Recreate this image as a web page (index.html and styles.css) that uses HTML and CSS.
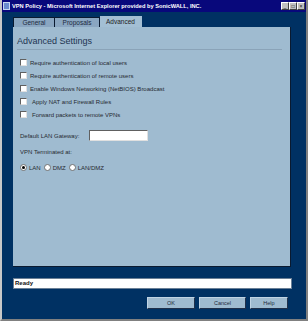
FILE: index.html
```html
<!DOCTYPE html>
<html lang="en">

<head>
    <meta charset="UTF-8">
    <title>VPN Policy</title>
    <link rel="stylesheet" href="styles.css">
</head>

<body>
    <div class="window">
        <div class="title-bar">
            <span class="title-icon"></span>
            <span class="title-text">VPN Policy - Microsoft Internet Explorer provided by SonicWALL, INC.</span>
            <div class="title-buttons">
                <span class="tb-btn">_</span>
                <span class="tb-btn">□</span>
                <span class="tb-btn">×</span>
            </div>
        </div>

        <div class="window-body">
            <div class="tabs">
                <div class="tab">General</div>
                <div class="tab">Proposals</div>
                <div class="tab active">Advanced</div>
            </div>

            <div class="panel">
                <h3 class="panel-header">Advanced Settings</h3>

                <div class="panel-body">
                    <div class="options">
                        <label class="option"><span class="checkbox"></span>Require authentication of local users</label>
                        <label class="option"><span class="checkbox"></span>Require authentication of remote users</label>
                        <label class="option"><span class="checkbox"></span>Enable Windows Networking (NetBIOS) Broadcast</label>
                        <label class="option indent"><span class="checkbox"></span>Apply NAT and Firewall Rules</label>
                        <label class="option indent"><span class="checkbox"></span>Forward packets to remote VPNs</label>
                    </div>

                    <div class="gateway-row">
                        <span class="gateway-label">Default LAN Gateway:</span>
                        <span class="text-input"></span>
                    </div>

                    <div class="vpn-label">VPN Terminated at:</div>
                    <div class="radio-row">
                        <label class="radio-item"><span class="radio checked"></span>LAN</label>
                        <label class="radio-item"><span class="radio"></span>DMZ</label>
                        <label class="radio-item"><span class="radio"></span>LAN/DMZ</label>
                    </div>
                </div>
            </div>

            <div class="status-bar">Ready</div>

            <div class="footer-buttons">
                <button class="btn">OK</button>
                <button class="btn cancel">Cancel</button>
                <button class="btn help">Help</button>
            </div>
        </div>
    </div>
</body>

</html>
```

FILE: styles.css
```css
body {
    margin: 0;
    width: 308px;
    height: 321px;
    font-family: "Liberation Sans", Arial, sans-serif;
    overflow: hidden;
}

.window {
    width: 308px;
    height: 321px;
    box-sizing: border-box;
    border: 2px solid #c8c8c8;
    border-top: none;
    border-right-color: #808080;
    border-bottom-color: #808080;
    display: flex;
    flex-direction: column;
    background-color: #003163;
}

.title-bar {
    height: 12px;
    background-color: #08087b;
    display: flex;
    align-items: center;
    padding: 0 1px 0 1px;
    color: #fff;
}

.title-icon {
    width: 5px;
    height: 6px;
    background-color: #6b8cce;
    border: 1px solid #c8d8f0;
    margin-right: 2px;
}

.title-text {
    font-size: 5.7px;
    font-weight: bold;
    white-space: nowrap;
    flex: 1;
}

.title-buttons {
    display: flex;
}

.tb-btn {
    width: 6px;
    height: 6px;
    background-color: #c0c0c0;
    color: #000;
    font-size: 5px;
    line-height: 6px;
    text-align: center;
    border: 1px solid;
    border-color: #fff #404040 #404040 #fff;
}

.window-body {
    flex: 1;
    display: flex;
    flex-direction: column;
    padding: 4px 15px 0 11px;
}

/* Tabs */

.tabs {
    display: flex;
    height: 11px;
    align-items: flex-end;
}

.tab {
    width: 42px;
    height: 10px;
    box-sizing: border-box;
    border: 1px solid #0a1a30;
    border-bottom: none;
    background-color: #8aa6c1;
    color: #1b2a40;
    font-size: 6.5px;
    text-align: center;
    line-height: 9px;
}

.tab + .tab {
    border-left: none;
    width: 45px;
}

.tab.active {
    width: 42px;
    height: 11px;
    background-color: #a3bfd4;
    border-color: #a3bfd4;
    color: #222;
}

/* Panel */

.panel {
    height: 239px;
    background-color: #9fbbd0;
    border-right: 1px solid #0a1a30;
    border-bottom: 1px solid #0a1a30;
    padding: 0 4px;
}

.panel-header {
    margin: 0;
    padding: 9px 0 3px 0;
    font-size: 9px;
    font-weight: normal;
    color: #1e3450;
    border-bottom: 1px solid #8aa3b8;
    margin-right: 4px;
}

.panel-body {
    padding-left: 3px;
    font-size: 6px;
    color: #262a30;
}

.options {
    display: flex;
    flex-direction: column;
    gap: 6px;
    padding-top: 9px;
}

.option {
    display: flex;
    align-items: center;
    height: 7px;
    white-space: nowrap;
}

.checkbox {
    width: 5px;
    height: 5px;
    background-color: #fff;
    border: 1px solid;
    border-color: #606060 #e0e0e0 #e0e0e0 #606060;
    margin-right: 3px;
}

.option.indent .checkbox {
    margin-right: 5px;
}

.gateway-row {
    display: flex;
    align-items: center;
    margin-top: 12px;
}

.gateway-label {
    width: 69px;
}

.text-input {
    width: 57px;
    height: 9px;
    background-color: #fff;
    border: 1px solid;
    border-color: #606060 #e0e0e0 #e0e0e0 #606060;
}

.vpn-label {
    margin-top: 8px;
}

.radio-row {
    display: flex;
    margin-top: 9px;
    gap: 3px;
}

.radio-item {
    display: flex;
    align-items: center;
}

.radio {
    width: 5px;
    height: 5px;
    border-radius: 50%;
    background-color: #fff;
    border: 1px solid #707070;
    margin-right: 2px;
    position: relative;
}

.radio.checked::after {
    content: "";
    position: absolute;
    left: 1px;
    top: 1px;
    width: 3px;
    height: 3px;
    border-radius: 50%;
    background-color: #000;
}

/* Status and buttons */

.status-bar {
    margin-top: 11px;
    height: 9px;
    background-color: #fff;
    border: 1px solid #6a7f96;
    font-size: 6px;
    font-weight: bold;
    line-height: 9px;
    padding-left: 1px;
    color: #111;
    margin-right: -1px;
}

.footer-buttons {
    display: flex;
    justify-content: flex-end;
    margin-top: 8px;
    margin-right: 3px;
    gap: 4px;
}

.btn {
    width: 48px;
    height: 12px;
    padding: 0;
    font-family: inherit;
    font-size: 5.5px;
    color: #1e2a3a;
    background-color: #9fbbd0;
    border: 1px solid;
    border-color: #c0d4e4 #20304a #20304a #c0d4e4;
}

.btn.cancel {
    width: 47px;
}

.btn.help {
    width: 38px;
}
```
